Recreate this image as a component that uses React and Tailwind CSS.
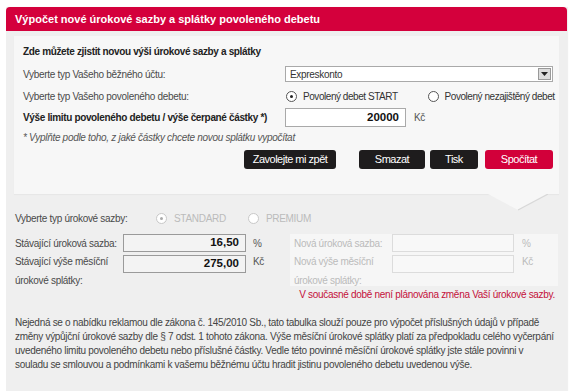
function Radio({ checked, disabled }) {
  return (
    <span
      className={`inline-flex shrink-0 items-center justify-center w-[11px] h-[11px] rounded-full border bg-white ${
        disabled ? 'border-[#c8c8c8]' : 'border-[#555]'
      }`}
    >
      {checked && <span className={`w-[3px] h-[3px] rounded-full ${disabled ? 'bg-[#aaa]' : 'bg-[#222]'}`} />}
    </span>
  )
}

function Btn({ children, red, className = '' }) {
  return (
    <button
      type="button"
      className={`h-[19px] rounded-[3px] text-white text-[11px] tracking-[-0.5px] leading-none ${red ? 'bg-[#d2003a]' : 'bg-[#1e1c1d]'} ${className}`}
    >
      {children}
    </button>
  )
}

export default function App() {
  return (
    <div className="w-[575px] h-[391px] bg-white overflow-hidden font-['Liberation_Sans',Arial,sans-serif]">
      <div className="ml-[6px] mt-[7px] w-[561px] h-[384px] bg-[#efefef] shadow-[1px_0_1px_rgba(0,0,0,0.06)]">
        {/* Header */}
        <div className="h-[24px] rounded-t-[4px] bg-[#d4003c] pl-[9px] flex items-center text-white font-bold text-[11px]">
          Výpočet nové úrokové sazby a splátky povoleného debetu
        </div>

        {/* Calculator box */}
        <div className="relative mx-[8px] mt-[5px] h-[158px] bg-[#f7f7f7] shadow-[0_1px_1px_rgba(0,0,0,0.03)] pl-[9px] pr-[5px] pt-[8px] text-[10px] tracking-[-0.3px] text-[#4a4a4a] whitespace-nowrap">
          <div className="font-bold text-[#222] h-[16px] leading-[16px] tracking-[-0.35px]">Zde můžete zjistit novou výši úrokové sazby a splátky</div>

          <div className="flex items-center h-[16px] mt-[6px]">
            <div className="w-[262px]">Vyberte typ Vašeho běžného účtu:</div>
            <div className="w-[268px] h-[16px] bg-white border border-[#a9a9a9] flex items-center justify-between pl-[4px] pr-[1px] text-[#333]">
              <span>Expreskonto</span>
              <span className="w-[13px] h-[12px] bg-[#dcdcdc] border border-[#999] flex items-center justify-center">
                <svg width="7" height="4" viewBox="0 0 7 4">
                  <path d="M0 0 L7 0 L3.5 4 Z" fill="#222" />
                </svg>
              </span>
            </div>
          </div>

          <div className="flex items-center h-[16px] mt-[6px]">
            <div className="w-[262px] shrink-0">Vyberte typ Vašeho povoleného debetu:</div>
            <div className="flex items-center pl-[1px] text-[#333] tracking-[-0.45px]">
              <Radio checked />
              <span className="ml-[6px]">Povolený debet START</span>
              <span className="ml-[30px] inline-flex"><Radio /></span>
              <span className="ml-[6px]">Povolený nezajištěný debet</span>
            </div>
          </div>

          <div className="flex items-center h-[19px] mt-[4px]">
            <div className="w-[262px] font-bold text-[#222] tracking-[-0.35px]">Výše limitu povoleného debetu / výše čerpané částky *)</div>
            <div className="w-[121px] h-[19px] bg-white border border-[#a9a9a9] flex items-center justify-end pr-[6px] font-bold text-[11.5px] tracking-normal text-[#111]">
              20000
            </div>
            <span className="ml-[8px] text-[#555]">Kč</span>
          </div>

          <div className="italic text-[#555] mt-[4px] h-[14px] leading-[14px]">
            * Vyplňte podle toho, z jaké částky chcete novou splátku vypočítat
          </div>

          <div className="flex justify-end mt-[5px] pr-[1px]">
            <Btn className="w-[92px]">Zavolejte mi zpět</Btn>
            <Btn className="w-[66px] ml-[23px]">Smazat</Btn>
            <Btn className="w-[48px] ml-[5px]">Tisk</Btn>
            <Btn red className="w-[68px] ml-[7px]">Spočítat</Btn>
          </div>

          {/* notch */}
          <svg className="absolute left-[474px] top-[158px]" width="60" height="17" viewBox="0 0 60 17">
            <path d="M0 0 L30 16 L60 0 Z" fill="#f7f7f7" />
            <path d="M30 16 L60 0" stroke="#d8d8d8" strokeWidth="1.2" fill="none" />
          </svg>
        </div>

        {/* Result section */}
        <div className="px-[9px] pt-[16px] text-[10px] tracking-[-0.3px] text-[#4a4a4a] whitespace-nowrap">
          <div className="flex items-center h-[16px]">
            <div className="w-[117px]">Vyberte typ úrokové sazby:</div>
            <span className="ml-[24px] inline-flex"><Radio checked disabled /></span>
            <span className="ml-[7px] text-[#bbb]">STANDARD</span>
            <span className="ml-[22px] inline-flex"><Radio disabled /></span>
            <span className="ml-[7px] text-[#bbb]">PREMIUM</span>
          </div>

          <div className="flex h-[52px] mt-[8px]">
            <div className="w-[275px]">
              <div className="flex items-start h-[21px]">
                <div className="w-[108px] pt-[2px]">Stávající úroková sazba:</div>
                <div className="w-[123px] h-[18px] bg-[#f3f3f3] border border-[#9a9a9a] flex items-center justify-end pr-[6px] font-bold text-[11.5px] tracking-normal text-[#111]">
                  16,50
                </div>
                <span className="ml-[7px] pt-[2px] text-[#555]">%</span>
              </div>
              <div className="flex items-start">
                <div className="w-[108px] leading-[19px] -mt-[3px]">Stávající výše měsíční<br />úrokové splátky:</div>
                <div className="w-[123px] h-[18px] bg-[#f3f3f3] border border-[#9a9a9a] flex items-center justify-end pr-[6px] font-bold text-[11.5px] tracking-normal text-[#111]">
                  275,00
                </div>
                <span className="ml-[7px] -mt-[1px] text-[#555]">Kč</span>
              </div>
            </div>

            <div className="w-[268px] h-[52px] bg-[#f6f6f6] pl-[4px] text-[#bbb]">
              <div className="flex items-start h-[21px]">
                <div className="w-[98px] pt-[2px]">Nová úroková sazba:</div>
                <div className="w-[122px] h-[18px] border border-[#dcdcdc] bg-[#f8f8f8]" />
                <span className="ml-[8px] pt-[2px]">%</span>
              </div>
              <div className="flex items-start">
                <div className="w-[98px] leading-[19px] -mt-[3px]">Nová výše měsíční<br />úrokové splátky:</div>
                <div className="w-[122px] h-[18px] border border-[#dcdcdc] bg-[#f8f8f8]" />
                <span className="ml-[8px] -mt-[1px]">Kč</span>
              </div>
            </div>
          </div>

          <div className="text-right text-[#c4103a] mt-[2px] pr-[3px] h-[14px] leading-[14px]">
            V současné době není plánována změna Vaší úrokové sazby.
          </div>

          <div className="mt-[14px] leading-[14px] tracking-[-0.3px] text-[#444]">
            Nejedná se o nabídku reklamou dle zákona č. 145/2010 Sb., tato tabulka slouží pouze pro výpočet příslušných údajů v případě<br />
            změny výpůjční úrokové sazby dle § 7 odst. 1 tohoto zákona. Výše měsíční úrokové splátky platí za předpokladu celého vyčerpání<br />
            uvedeného limitu povoleného debetu nebo příslušné částky. Vedle této povinné měsíční úrokové splátky jste stále povinni v<br />
            souladu se smlouvou a podmínkami k vašemu běžnému účtu hradit jistinu povoleného debetu uvedenou výše.
          </div>
        </div>
      </div>
    </div>
  )
}
